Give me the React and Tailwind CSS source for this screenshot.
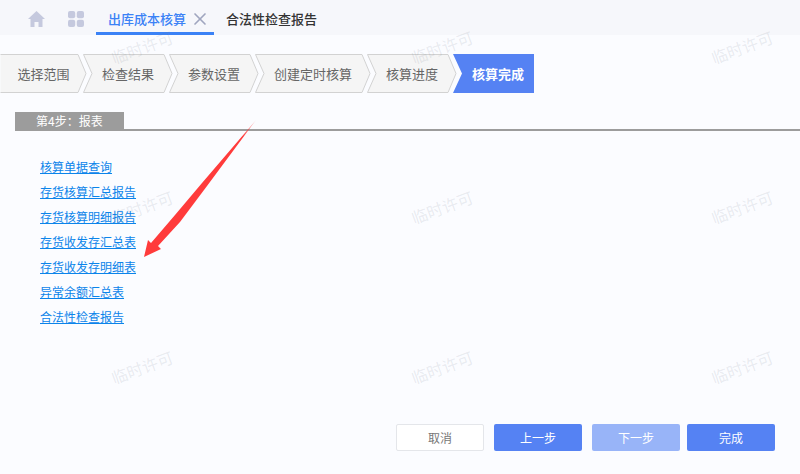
import { X } from "lucide-react";

const steps = [
  { label: "选择范围", width: 87, first: true },
  { label: "检查结果", width: 90 },
  { label: "参数设置", width: 90 },
  { label: "创建定时核算", width: 116 },
  { label: "核算进度", width: 90 },
];

const links = [
  "核算单据查询",
  "存货核算汇总报告",
  "存货核算明细报告",
  "存货收发存汇总表",
  "存货收发存明细表",
  "异常余额汇总表",
  "合法性检查报告",
];

const watermarks = [
  "left-[110px] top-[35px]",
  "left-[410px] top-[35px]",
  "left-[710px] top-[35px]",
  "left-[110px] top-[195px]",
  "left-[410px] top-[195px]",
  "left-[710px] top-[195px]",
  "left-[110px] top-[355px]",
  "left-[410px] top-[355px]",
  "left-[710px] top-[355px]",
];

function Step({ label, width, first }) {
  const right = width - 9;
  const d = first
    ? `M0.5 0.5 H${right} L${width - 1} 19.5 L${right} 38.5 H0.5`
    : `M0.5 0.5 H${right} L${width - 1} 19.5 L${right} 38.5 H0.5 L9 19.5 Z`;
  return (
    <div
      className="relative -mr-[4px] flex h-[39px] items-center justify-center"
      style={{ width }}
    >
      <svg className="absolute inset-0" width={width} height="39">
        <path d={d} fill="#f5f5f5" stroke="#d2d2d2" />
      </svg>
      <span className="relative text-[13px] text-[#666]">{label}</span>
    </div>
  );
}

function ActiveStep() {
  return (
    <div className="relative flex h-[39px] w-[81px] items-center justify-end pr-[10px]">
      <svg className="absolute inset-0" width="81" height="39">
        <path d="M0 0 H81 V39 H0 L9 19.5 Z" fill="#5582f3" />
      </svg>
      <span className="relative text-[13px] font-bold text-white">核算完成</span>
    </div>
  );
}

function FooterButton({ children, className }) {
  return (
    <button className={`h-[27px] w-[88px] rounded-[2px] text-[12px] ${className}`}>
      {children}
    </button>
  );
}

export default function App() {
  return (
    <div className="relative flex h-[474px] w-[800px] flex-col overflow-hidden bg-[#fbfcff] font-['Noto_Sans_CJK_SC',sans-serif]">
      {/* Tabs */}
      <header className="flex h-[35px] items-center bg-[#f6f7fb] pl-[28px]">
        <svg width="17" height="16" viewBox="0 0 17 16" className="mt-[3px]">
          <path d="M8.500 0 L17 8 H14.500 V16 H10.500 V11 H6.500 V16 H2.500 V8 H0 Z" fill="#c5c9de" />
        </svg>
        <svg width="16" height="16" viewBox="0 0 16 16" className="mt-[3px] ml-[23px]">
          <rect x="0" y="0" width="7.200" height="7.200" rx="2" fill="#c5c9de" />
          <rect x="8.800" y="0" width="7.200" height="7.200" rx="2" fill="#c5c9de" />
          <rect x="0" y="8.800" width="7.200" height="7.200" rx="2" fill="#c5c9de" />
          <rect x="8.800" y="8.800" width="7.200" height="7.200" rx="2" fill="#c5c9de" />
        </svg>
        <div className="ml-[12px] flex h-[35px] w-[118px] items-center border-b-[3px] border-[#3b82f6] pt-[6px] pl-[12px]">
          <span className="text-[13px] font-medium text-[#3b82f6]">出库成本核算</span>
          <X className="ml-[4px] h-[20px] w-[20px] text-[#a0a6bf]" strokeWidth={2} />
        </div>
        <span className="mt-[3px] ml-[12px] text-[13px] font-medium text-[#333]">合法性检查报告</span>
      </header>

      {/* Steps */}
      <div className="mt-[19px] flex">
        {steps.map((step) => (
          <Step key={step.label} {...step} />
        ))}
        <ActiveStep />
      </div>

      {/* Section title */}
      <div className="mt-[19px] ml-[15px] border-b-2 border-[#9c9c9c]">
        <div className="h-[17px] w-[109px] bg-[#9c9c9c] pl-[21px] text-[12px] leading-[17px] text-white">
          第4步：报表
        </div>
      </div>

      {/* Links */}
      <ul className="mt-[27px] ml-[40px] flex flex-1 flex-col gap-[7px]">
        {links.map((link) => (
          <li key={link} className="h-[18px] text-[12px] leading-[18px]">
            <a href="#" className="text-[#0b84ea] underline">
              {link}
            </a>
          </li>
        ))}
      </ul>

      {/* Footer */}
      <footer className="flex justify-end pr-[25px] pb-[23px]">
        <FooterButton className="border border-[#e4e6ea] bg-white text-[#777]">取消</FooterButton>
        <FooterButton className="ml-[10px] bg-[#5582f3] text-white">上一步</FooterButton>
        <FooterButton className="ml-[10px] bg-[#98b4f8] text-white">下一步</FooterButton>
        <FooterButton className="ml-[7px] bg-[#5582f3] text-white">完成</FooterButton>
      </footer>

      {/* Watermark, translucent over the content */}
      {watermarks.map((pos) => (
        <span
          key={pos}
          className={`pointer-events-none absolute -rotate-[20deg] text-[16px] text-[#78808f]/15 ${pos}`}
        >
          临时许可
        </span>
      ))}

      {/* Annotation arrow */}
      <svg className="pointer-events-none absolute inset-0" width="800" height="474">
        <defs>
          <linearGradient id="arrowFade" x1="256" y1="120" x2="144" y2="257" gradientUnits="userSpaceOnUse">
            <stop offset="0" stopColor="#ff3b3b" stopOpacity="0.2" />
            <stop offset="0.12" stopColor="#ff3b3b" />
            <stop offset="1" stopColor="#ff3b3b" />
          </linearGradient>
        </defs>
        <path
          d="M256 120 L207 186 L180 222 L158 246 L161 249 L144 257 L148 240 L151 243 L175 215 L202 183 Z"
          fill="url(#arrowFade)"
        />
      </svg>
    </div>
  );
}
